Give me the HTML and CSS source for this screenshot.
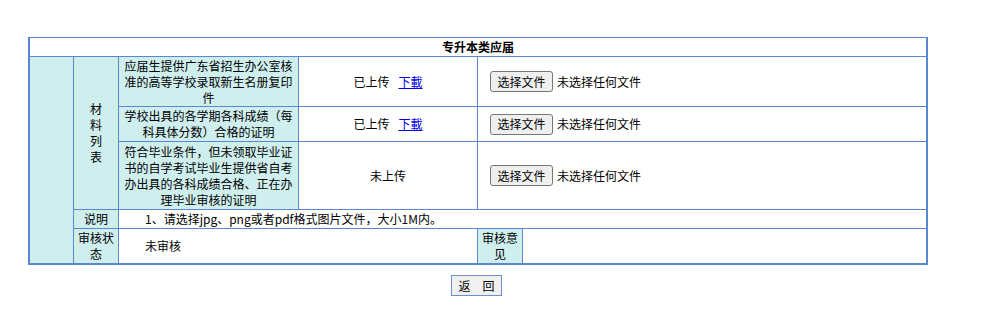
FILE: index.html
```html
<!DOCTYPE html>
<html lang="zh-CN">
<head>
<meta charset="utf-8">
<title>专升本类应届</title>
<link rel="stylesheet" href="styles.css">
</head>
<body>
<div class="wrap">
  <div class="grid">
    <div class="cell title">专升本类应届</div>
    <div class="cell cyan side"></div>
    <div class="cell cyan label list"><span class="vert">材料列表</span></div>

    <div class="cell cyan item r1">应届生提供广东省招生办公室核准的高等学校录取新生名册复印件</div>
    <div class="cell status r1">已上传<a href="#" class="dl">下載</a></div>
    <div class="cell file r1"><span class="pick">选择文件</span><span class="none">未选择任何文件</span></div>

    <div class="cell cyan item r2">学校出具的各学期各科成绩（每科具体分数）合格的证明</div>
    <div class="cell status r2">已上传<a href="#" class="dl">下載</a></div>
    <div class="cell file r2"><span class="pick">选择文件</span><span class="none">未选择任何文件</span></div>

    <div class="cell cyan item r3">符合毕业条件，但未领取毕业证书的自学考试毕业生提供省自考办出具的各科成绩合格、正在办理毕业审核的证明</div>
    <div class="cell status r3">未上传</div>
    <div class="cell file r3"><span class="pick">选择文件</span><span class="none">未选择任何文件</span></div>

    <div class="cell cyan label r4">说明</div>
    <div class="cell note r4">1、请选择jpg、png或者pdf格式图片文件，大小1M内。</div>

    <div class="cell cyan label r5">审核状态</div>
    <div class="cell note span2 r5">未审核</div>
    <div class="cell cyan opinion r5">审核意见</div>
    <div class="cell blank r5"></div>
  </div>
  <div class="actions">
    <button class="back" type="button">返　回</button>
  </div>
</div>
</body>
</html>
```
FILE: styles.css
```css
* { box-sizing: border-box; }
body {
  margin: 0;
  background: #fff;
  font-family: "Microsoft YaHei", "Noto Sans CJK SC", sans-serif;
  font-size: 12px;
  color: #000;
}
.wrap {
  width: 900px;
  margin: 37px 0 0 28px;
}
.grid {
  display: grid;
  grid-template-columns: 43px 44px 179px 178px 44px 403px;
  grid-template-rows: 18px 49px 34px 67px 18px 34px;
  gap: 1px;
  background: #5b86d1;
  padding: 1px 2px 2px 2px;
}
.cell {
  background: #fff;
  display: flex;
  align-items: center;
  justify-content: center;
  text-align: center;
  line-height: 16px;
}
.cyan { background: #cfeeee; }
.title {
  grid-column: 1 / 7;
  grid-row: 1;
  font-weight: bold;
}
.side { grid-column: 1; grid-row: 2 / 7; }
.list { grid-column: 2; grid-row: 2 / 5; }
.vert { width: 12px; display: block; word-break: break-all; }
.r1 { grid-row: 2; }
.r2 { grid-row: 3; }
.r3 { grid-row: 4; }
.r4 { grid-row: 5; }
.r5 { grid-row: 6; }
.item { grid-column: 3; }
.status { grid-column: 4; }
.file { grid-column: 5 / 7; justify-content: flex-start; padding-left: 12px; }
.label { grid-column: 2; }
.note { grid-column: 3 / 7; justify-content: flex-start; padding-left: 26px; }
.note.span2 { grid-column: 3 / 5; }
.opinion { grid-column: 5; }
.blank { grid-column: 6; }
.dl { color: #0000ee; text-decoration: underline; margin-left: 9px; }
.pick {
  display: inline-flex;
  align-items: center;
  justify-content: center;
  width: 63px;
  height: 21px;
  background: #efefef;
  border: 1px solid #767676;
  border-radius: 3px;
  font-size: 12px;
}
.none { margin-left: 4px; }
.actions {
  display: flex;
  justify-content: center;
  padding-top: 10px;
  padding-right: 3px;
}
.back {
  width: 51px;
  height: 21px;
  padding: 0;
  margin: 0;
  background: #f0f0f0;
  border: 1px solid #6b8fd0;
  border-radius: 0;
  font-family: "Microsoft YaHei", "Noto Sans CJK SC", sans-serif;
  font-size: 12px;
  color: #000;
  line-height: 19px;
}
```
